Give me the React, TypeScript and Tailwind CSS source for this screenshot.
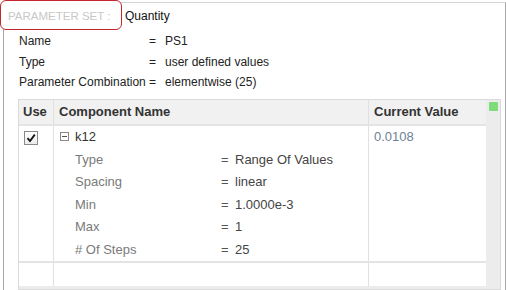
import React from 'react';

const info = [
  { label: 'Name', value: 'PS1' },
  { label: 'Type', value: 'user defined values' },
  { label: 'Parameter Combination', value: 'elementwise (25)' },
];

const details = [
  { label: 'Type', value: 'Range Of Values' },
  { label: 'Spacing', value: 'linear' },
  { label: 'Min', value: '1.0000e-3' },
  { label: 'Max', value: '1' },
  { label: '# Of Steps', value: '25' },
];

const App: React.FC = () => {
  return (
    <div className="w-[506px] h-[290px] overflow-hidden bg-white font-['Liberation_Sans',Arial,sans-serif] text-[#222]">
      {/* fieldset frame */}
      <div className="mt-[2px] ml-[3px] w-[503px] h-[300px] border-t border-t-[#d6d6d6] border-l border-l-[#a8a8a8] border-r border-r-[#a8a8a8]">
        {/* legend */}
        <div className="-mt-[3px] -ml-[4px] flex items-center">
          <div className="w-[122px] h-[30px] bg-white border border-[#c4262e] rounded-[6px] pl-[7px] pt-[3px] flex items-center text-[11.5px] text-[#c8c8c8]">
            PARAMETER SET :
          </div>
          <span className="ml-[3px] pt-[2px] text-[12px] text-[#111]">Quantity</span>
        </div>

        {/* header info */}
        <div className="mt-[1px] pl-[15px] text-[12px] text-[#222]">
          {info.map((r) => (
            <div key={r.label} className="flex items-center h-[20.5px]">
              <span className="w-[130px]">{r.label}</span>
              <span className="w-[16px]">=</span>
              <span>{r.value}</span>
            </div>
          ))}
        </div>

        {/* table panel */}
        <div className="mt-[6px] ml-[14px] w-[483px] border border-[#dadada] bg-[#ececec] pb-[3px] flex">
          <div className="w-[467px] bg-white text-[13px]">
            {/* header */}
            <div className="flex h-[26px] bg-[#f1f1f1] border-b-2 border-[#e4e4e4] font-bold text-[#333]">
              <div className="w-[35px] pl-[4px] flex items-center border-r border-[#e0e0e0]">Use</div>
              <div className="w-[315px] pl-[5px] flex items-center border-r border-[#e0e0e0]">Component Name</div>
              <div className="flex-1 pl-[5px] flex items-center">Current Value</div>
            </div>
            {/* body */}
            <div className="flex h-[137px] border-b-2 border-[#e4e4e4]">
              <div className="w-[35px] border-r border-[#e0e0e0] pl-[5px] pt-[5px]">
                <div className="w-[14px] h-[14px] border border-[#8a8a8a] bg-gradient-to-b from-white to-[#ececec] flex items-center justify-center">
                  <svg width="10" height="10" viewBox="0 0 10 10">
                    <path d="M1.5 5.2 L4 8 L8.8 1.6" fill="none" stroke="#111" strokeWidth="1.8" />
                  </svg>
                </div>
              </div>
              <div className="w-[315px] border-r border-[#e0e0e0]">
                <div className="flex items-center h-[22.6px] pl-[6px]">
                  <svg width="9" height="9" viewBox="0 0 9 9" className="mr-[6px]">
                    <rect x="0.5" y="0.5" width="8" height="8" fill="white" stroke="#888" />
                    <path d="M2 4.5 H7" stroke="#555" strokeWidth="1" />
                  </svg>
                  <span className="text-[#333]">k12</span>
                </div>
                {details.map((d) => (
                  <div key={d.label} className="flex items-center h-[22.6px] pl-[21px]">
                    <span className="w-[146px] text-[#7a7a7a]">{d.label}</span>
                    <span className="w-[14px] text-[#555]">=</span>
                    <span className="text-[#444]">{d.value}</span>
                  </div>
                ))}
              </div>
              <div className="flex-1 pl-[5px]">
                <div className="h-[22.6px] flex items-center text-[#6f7f96]">0.0108</div>
              </div>
            </div>
            {/* empty row */}
            <div className="flex h-[23px]">
              <div className="w-[35px] border-r border-[#e0e0e0]"></div>
              <div className="w-[315px] border-r border-[#e0e0e0]"></div>
              <div className="flex-1"></div>
            </div>
          </div>
          <div className="flex-1 pt-[2px] pl-[3px]">
            <div className="w-[9px] h-[9px] bg-[#7ddc7a] rounded-[1px]"></div>
          </div>
        </div>
      </div>
    </div>
  );
};

export default App;
